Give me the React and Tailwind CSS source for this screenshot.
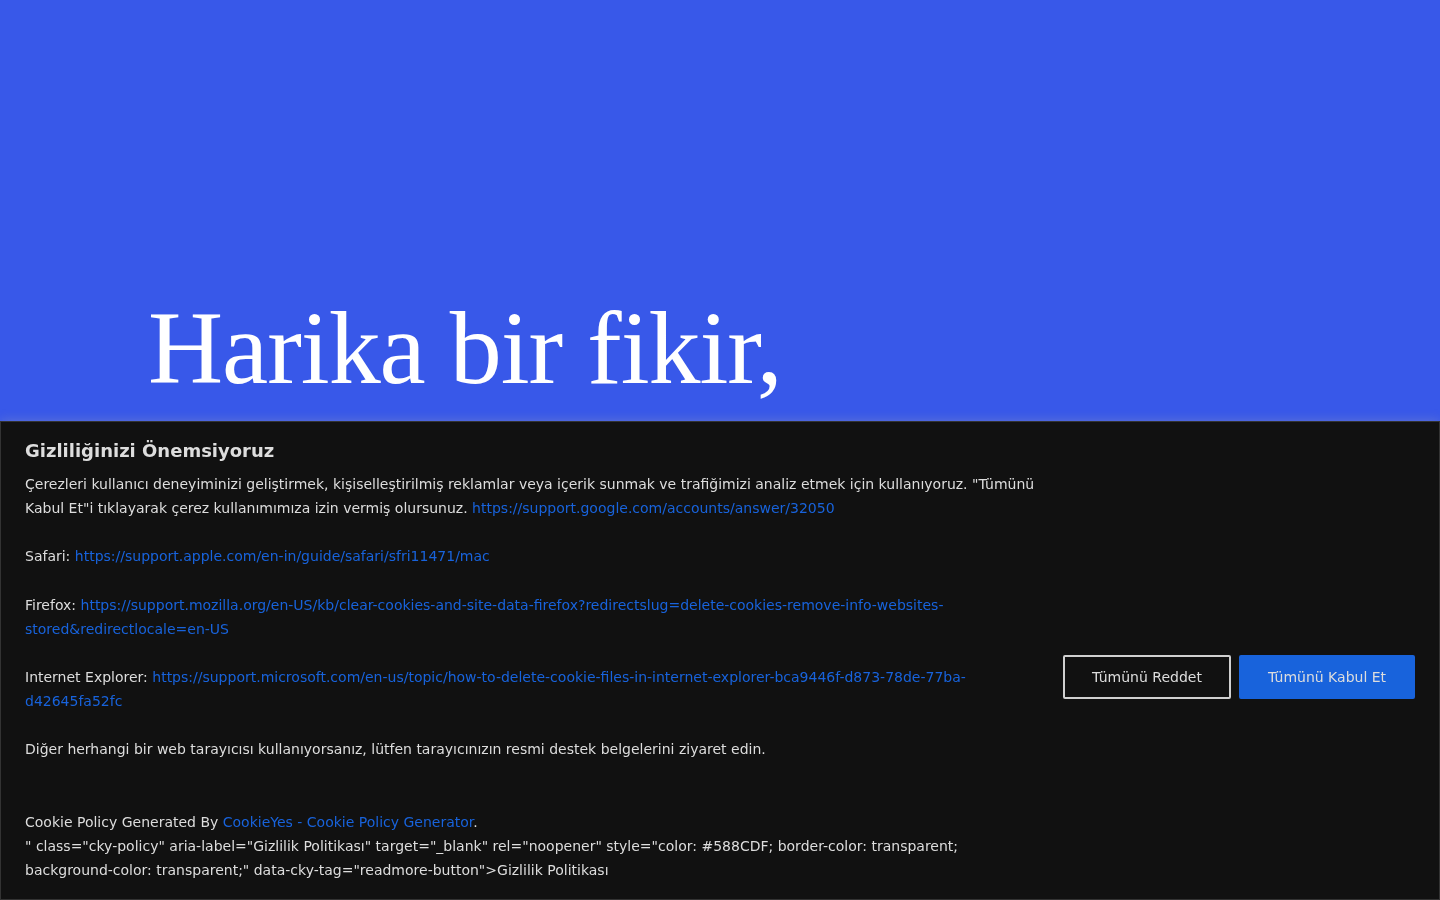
export default function App() {
  const link = "text-[#1863dc]";
  return (
    <div className="min-h-[900px] bg-[#3858e9]">
      <div className="pt-[296px] pl-[148px]">
        <h1 className="text-[104px] leading-[1] text-white tracking-[-0.01em]" style={{ fontFamily: '"Liberation Serif", serif' }}>
          Harika bir fikir,
        </h1>
      </div>
      <div
        className="fixed bottom-0 left-0 right-0 h-[479px] bg-[#111111] border border-[#333333] shadow-[0_-1px_10px_0_rgba(172,171,171,0.3)] px-6 pt-[16px] text-[#dddddd]"
        style={{ fontFamily: '"DejaVu Sans", sans-serif' }}
      >
        <p className="text-[18px] font-bold leading-[24px] my-[1px]">Gizliliğinizi Önemsiyoruz</p>
        <div className="flex items-center gap-6 mt-[9px]">
          <div className="flex-1 text-[14px] leading-[24.13px]">
            Çerezleri kullanıcı deneyiminizi geliştirmek, kişiselleştirilmiş reklamlar veya içerik sunmak ve trafiğimizi analiz etmek için kullanıyoruz. "Tümünü Kabul Et"i tıklayarak çerez kullanımımıza izin vermiş olursunuz.{" "}
            <span className={link}>https://support.google.com/accounts/answer/32050</span>
            <br />
            <br />
            Safari: <span className={link}>https://support.apple.com/en-in/guide/safari/sfri11471/mac</span>
            <br />
            <br />
            Firefox:{" "}
            <span className={link}>
              https://support.mozilla.org/en-US/kb/clear-cookies-and-site-data-firefox?redirectslug=delete-cookies-remove-info-websites-stored&amp;redirectlocale=en-US
            </span>
            <br />
            <br />
            Internet Explorer:{" "}
            <span className={link}>
              https://support.microsoft.com/en-us/topic/how-to-delete-cookie-files-in-internet-explorer-bca9446f-d873-78de-77ba-d42645fa52fc
            </span>
            <br />
            <br />
            Diğer herhangi bir web tarayıcısı kullanıyorsanız, lütfen tarayıcınızın resmi destek belgelerini ziyaret edin.
            <br />
            <br />
            <br />
            Cookie Policy Generated By <span className={link}>CookieYes - Cookie Policy Generator</span>.
            <br />
            " class="cky-policy" aria-label="Gizlilik Politikası" target="_blank" rel="noopener" style="color: #588CDF; border-color: transparent; background-color: transparent;" data-cky-tag="readmore-button"&gt;Gizlilik Politikası
          </div>
          <div className="flex gap-2 shrink-0">
            <button className="w-[168px] h-[44px] border-2 border-[#d0d0d0] rounded-[2px] text-[14px] text-[#dddddd] bg-transparent">
              Tümünü Reddet
            </button>
            <button className="w-[176px] h-[44px] border-2 border-[#1863dc] bg-[#1863dc] rounded-[2px] text-[14px] text-[#dddddd]">
              Tümünü Kabul Et
            </button>
          </div>
        </div>
      </div>
    </div>
  );
}
